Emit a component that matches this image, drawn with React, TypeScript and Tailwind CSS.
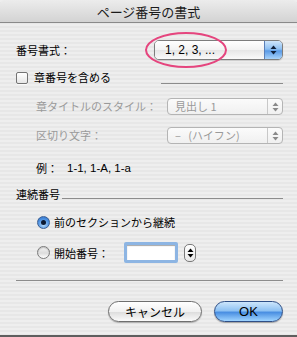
import React from "react";

const jp = "font-['Noto_Sans_CJK_JP','Noto_Sans',sans-serif]";

const Arrows = ({ color = "#000" }: { color?: string }) => (
  <svg width="7" height="10" viewBox="0 0 7 10" aria-hidden>
    <path d="M3.5 0.5 L6.5 4 L0.5 4 Z" fill={color} />
    <path d="M3.5 9.5 L6.5 6 L0.5 6 Z" fill={color} />
  </svg>
);

const Popup = ({ label, disabled }: { label: string; disabled?: boolean }) => {
  if (!disabled) {
    return (
      <div className="ml-auto flex h-[20px] w-[129px] rounded-[5px] border border-[#7d7d7d] shadow-[0_1px_1px_rgba(0,0,0,0.15)] overflow-hidden">
        <div className="flex flex-1 items-center pl-[10px] bg-[linear-gradient(#ffffff,#f2f2f2_50%,#e6e6e6_51%,#fafafa)] font-['Liberation_Sans',sans-serif] text-[12px] text-black">
          {label}
        </div>
        <div className="flex w-[18px] items-center justify-center border-l border-[#5a7fb8] bg-[linear-gradient(#cfe5fb,#8ec0f2_45%,#5a9ae6_55%,#a8d3fb)]">
          <Arrows color="#10203a" />
        </div>
      </div>
    );
  }
  return (
    <div className="ml-auto flex h-[17px] w-[116px] rounded-[4px] border border-[#b4b4b4] bg-[linear-gradient(#fbfbfb,#f0f0f0)] overflow-hidden">
      <div className={`flex flex-1 items-center whitespace-pre pl-[7px] text-[11px] text-[#9a9a9a] ${jp}`}>{label}</div>
      <div className="flex w-[15px] items-center justify-center border-l border-[#c8c8c8]">
        <Arrows color="#8a8a8a" />
      </div>
    </div>
  );
};

const Radio = ({ on }: { on?: boolean }) =>
  on ? (
    <span className="flex h-[13px] w-[13px] items-center justify-center rounded-full border border-[#3c5f92] bg-[radial-gradient(circle_at_50%_70%,#b9dcfb,#4a8fe0_60%,#2d6cc4)]">
      <span className="h-[5px] w-[5px] rounded-full bg-[#0c1a33]" />
    </span>
  ) : (
    <span className="h-[13px] w-[13px] rounded-full border border-[#7a7a7a] bg-[linear-gradient(#f4f4f4,#dcdcdc_55%,#ffffff)] shadow-[inset_0_1px_1px_rgba(0,0,0,0.2)]" />
  );

export default function App() {
  return (
    <div
      className={`flex h-[337px] w-[297px] flex-col border-b-2 border-[#5e5e5e] bg-[repeating-linear-gradient(180deg,#eeeeee_0px,#eeeeee_2px,#e7e7e7_2px,#e7e7e7_4px)] ${jp} text-black`}
    >
      {/* title bar */}
      <div className="flex h-[23px] items-center justify-center rounded-t-[5px] border-b border-[#8a8a8a] bg-[linear-gradient(#ececec,#d3d3d3)]">
        <span className="text-[13px] leading-none text-[#1a1a1a]">ページ番号の書式</span>
      </div>

      <div className="flex flex-1 flex-col pl-4 pr-[14px]">
        {/* number format */}
        <div className="relative mt-[17px] flex items-center">
          <span className="text-[11px]">番号書式：</span>
          <Popup label="1, 2, 3, ..." />
          <span className="pointer-events-none absolute left-[129px] top-[-8px] h-[36px] w-[82px] rounded-[50%] border-2 border-[#e5457e]" />
        </div>

        {/* include chapter */}
        <div className="mt-[11px] flex h-[13px] items-center">
          <span className="h-[12px] w-[12px] rounded-[2px] border border-[#737373] bg-[linear-gradient(#ffffff,#e6e6e6)] shadow-[0_1px_0_rgba(255,255,255,0.7)]" />
          <span className="ml-[6px] text-[11px]">章番号を含める</span>
          <span className="ml-auto w-[122px] self-end h-px bg-[#8c8c8c]" />
        </div>

        <div className="flex flex-col pl-[20px]">
          <div className="mt-[14px] flex items-center">
            <span className="text-[11px] text-[#9a9a9a]">章タイトルのスタイル：</span>
            <Popup label="見出し 1" disabled />
          </div>
          <div className="mt-[12px] flex items-center">
            <span className="text-[11px] text-[#9a9a9a]">区切り文字：</span>
            <Popup label="–   (ハイフン)" disabled />
          </div>
          <div className="mt-[16px] flex items-center text-[11px]">
            <span>例：</span>
            <span className="ml-[9px] font-['Liberation_Sans',sans-serif] text-[11.5px]">1-1, 1-A, 1-a</span>
          </div>
        </div>

        {/* continuous numbering */}
        <div className="mt-[9px] flex items-center">
          <span className="text-[11px]">連続番号</span>
          <span className="ml-[2px] mt-[7px] h-px flex-1 bg-[#8c8c8c]" />
        </div>

        <div className="mt-[11px] flex items-center pl-[21px]">
          <Radio on />
          <span className="ml-[4px] text-[11px]">前のセクションから継続</span>
        </div>

        <div className="mt-[12px] flex items-center pl-[21px]">
          <Radio />
          <span className="ml-[4px] text-[11px]">開始番号：</span>
          <span className="ml-[15px] h-[21px] w-[54px] rounded-[2px] border-[3px] border-[#8db5e3] bg-white shadow-[inset_0_1px_1px_rgba(0,0,0,0.35)]" />
          <span className="ml-[6px] flex h-[18px] w-[12px] items-center justify-center rounded-[5px] border border-[#7a7a7a] bg-[linear-gradient(#ffffff,#e8e8e8)]">
            <Arrows />
          </span>
        </div>

        <div className="mt-[17px] h-px bg-[#8c8c8c]" />

        {/* buttons */}
        <div className="mt-[20px] flex items-center justify-end gap-[12px]">
          <button className="flex h-[21px] w-[94px] items-center justify-center rounded-full border border-[#6f6f6f] bg-[linear-gradient(#ffffff,#f1f1f1_50%,#dcdcdc_51%,#fbfbfb)] text-[12px] shadow-[0_1px_1px_rgba(0,0,0,0.25)]">
            キャンセル
          </button>
          <button className="flex h-[21px] w-[69px] items-center justify-center rounded-full border border-[#2f4f86] bg-[linear-gradient(#cde6fc,#8fc2f3_45%,#4a8fe2_55%,#9fd4ff)] font-['Liberation_Sans',sans-serif] text-[13px] shadow-[0_1px_1px_rgba(0,0,0,0.3)]">
            OK
          </button>
        </div>
      </div>
    </div>
  );
}
